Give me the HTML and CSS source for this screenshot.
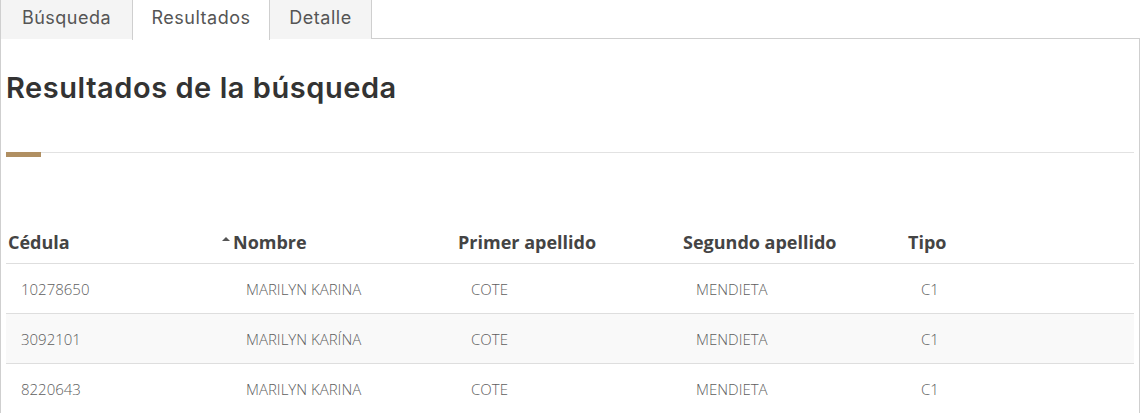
FILE: index.html
```html
<!DOCTYPE html>
<html lang="es">
<head>
<meta charset="utf-8">
<title>Resultados de la búsqueda</title>
<link rel="stylesheet" href="styles.css">
</head>
<body>
<div class="tabs">
  <div class="tab tab-1">Búsqueda</div>
  <div class="tab tab-2 active">Resultados</div>
  <div class="tab tab-3">Detalle</div>
</div>
<div class="panel">
  <h1 class="title">Resultados de la búsqueda</h1>
  <div class="rule"></div>
  <table class="results">
    <thead>
      <tr>
        <th class="c1">Cédula</th>
        <th class="c2"><span class="sorted">Nombre</span></th>
        <th class="c3">Primer apellido</th>
        <th class="c4">Segundo apellido</th>
        <th class="c5">Tipo</th>
      </tr>
    </thead>
    <tbody>
      <tr>
        <td>10278650</td><td>MARILYN KARINA</td><td>COTE</td><td>MENDIETA</td><td>C1</td>
      </tr>
      <tr class="alt">
        <td>3092101</td><td>MARILYN KARÍNA</td><td>COTE</td><td>MENDIETA</td><td>C1</td>
      </tr>
      <tr>
        <td>8220643</td><td>MARILYN KARINA</td><td>COTE</td><td>MENDIETA</td><td>C1</td>
      </tr>
    </tbody>
  </table>
</div>
</body>
</html>
```
FILE: styles.css
```css
html, body {
  margin: 0;
  padding: 0;
  background: #fff;
}
body {
  width: 1140px;
  font-family: "Open Sans", "Liberation Sans", sans-serif;
}
.tabs {
  display: flex;
  height: 38px;
  border-bottom: 1px solid #cfcfcf;
}
.tab {
  box-sizing: border-box;
  height: 39px;
  border: 1px solid #cfcfcf;
  border-top: none;
  border-bottom: none;
  background: #f4f4f4;
  color: #555;
  font-family: "Inter", "Noto Sans", sans-serif;
  font-size: 18px;
  letter-spacing: 0.5px;
  font-weight: 400;
  display: flex;
  align-items: center;
  justify-content: center;
  padding-bottom: 5px;
}
.tab-1 { width: 133px; }
.tab-2 { width: 138px; margin-left: -1px; }
.tab-3 { width: 103px; margin-left: -1px; }
.tab.active {
  background: #fff;
  height: 40px;
  padding-bottom: 6px;
  position: relative;
  z-index: 1;
}
.panel {
  border-left: 1px solid #cfcfcf;
  border-right: 1px solid #cfcfcf;
  padding: 0 5px 0 5px;
  height: 374px;
}
.title {
  margin: 0;
  padding-top: 31px;
  font-family: "Inter", "Noto Sans", sans-serif;
  font-size: 29px;
  line-height: 36px;
  font-weight: 600;
  color: #333;
  letter-spacing: 0.55px;
}
.rule {
  margin-top: 46px;
  height: 5px;
  background:
    linear-gradient(#b08f62, #b08f62) left top / 35px 5px no-repeat,
    linear-gradient(#e2e2e2, #e2e2e2) left top / 100% 1px no-repeat;
}
.results {
  margin-top: 64px;
  width: 1128px;
  border-collapse: collapse;
  table-layout: fixed;
}
.results th {
  text-align: left;
  font-weight: 700;
  font-size: 18px;
  color: #444;
  height: 42px;
  padding: 0 0 0 2px;
  border-bottom: 1px solid #dedede;
  vertical-align: middle;
}
.c1, .c2, .c3, .c4 { width: 223px; }
.sorted {
  position: relative;
}
.sorted::before {
  content: "";
  position: absolute;
  left: -11px;
  top: 7px;
  border-left: 4px solid transparent;
  border-right: 4px solid transparent;
  border-bottom: 4px solid #555;
}
.results td {
  height: 49px;
  padding: 0 0 0 15px;
  font-size: 15px;
  font-weight: 300;
  color: #5e5e5e;
  border-bottom: 1px solid #dedede;
  vertical-align: middle;
}
.results tr.alt td {
  background: #f9f9f9;
}
```
